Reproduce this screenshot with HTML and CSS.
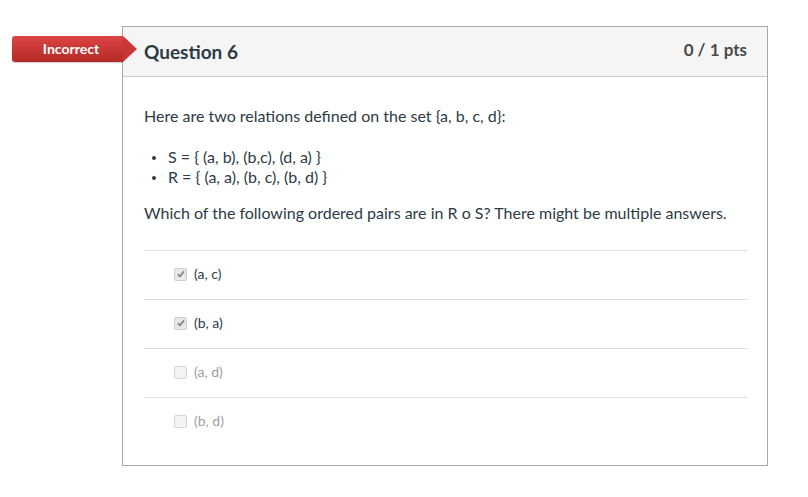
FILE: index.html
```html
<!DOCTYPE html>
<html>
<head>
<meta charset="utf-8">
<link rel="stylesheet" href="styles.css">
</head>
<body>
<div class="page">
  <div class="badge">Incorrect</div>
  <div class="card">
    <div class="card-header">
      <h2 class="q-title">Question 6</h2>
      <div class="pts">0 / 1 pts</div>
    </div>
    <div class="card-body">
      <p class="intro">Here are two relations defined on the set {a, b, c, d}:</p>
      <ul class="rels">
        <li>S = { (a, b), (b,c), (d, a) }</li>
        <li>R = { (a, a), (b, c), (b, d) }</li>
      </ul>
      <p class="ask">Which of the following ordered pairs are in R o S? There might be multiple answers.</p>
      <div class="answers">
        <div class="answer checked"><span class="cb"><svg viewBox="0 0 12 12" width="10" height="10"><path d="M2.3 6.3 L4.8 8.8 L9.6 2.8" fill="none" stroke="#8a8a8a" stroke-width="2.2" stroke-linejoin="round"/></svg></span><span class="label">(a, c)</span></div>
        <div class="answer checked"><span class="cb"><svg viewBox="0 0 12 12" width="10" height="10"><path d="M2.3 6.3 L4.8 8.8 L9.6 2.8" fill="none" stroke="#8a8a8a" stroke-width="2.2" stroke-linejoin="round"/></svg></span><span class="label">(b, a)</span></div>
        <div class="answer"><span class="cb"></span><span class="label">(a, d)</span></div>
        <div class="answer"><span class="cb"></span><span class="label">(b, d)</span></div>
      </div>
    </div>
  </div>
</div>
</body>
</html>
```

FILE: styles.css
```css
html, body {
  margin: 0;
  padding: 0;
  background: #fff;
}
body {
  font-family: Lato, "Liberation Sans", sans-serif;
  color: #2d3b45;
}
.page {
  position: relative;
  padding: 26px 0 0 122px;
}
.badge {
  position: absolute;
  left: 12px;
  top: 36px;
  width: 111px;
  height: 26px;
  background: linear-gradient(#dc4442, #b42a28);
  border-radius: 3px 0 0 3px;
  color: #fff;
  font-weight: 700;
  font-size: 14px;
  line-height: 26px;
  text-align: center;
  box-sizing: border-box;
  padding-left: 7px;
  box-shadow: 0 1px 1px rgba(0,0,0,0.2);
  z-index: 2;
}
.badge::after {
  content: "";
  position: absolute;
  right: -14px;
  top: 0;
  border-top: 13px solid transparent;
  border-bottom: 13px solid transparent;
  border-left: 14px solid #c93735;
}
.card {
  width: 644px;
  height: 438px;
  border: 1px solid #a8a8a8;
  box-sizing: content-box;
}
.card-header {
  height: 49px;
  background: #f5f5f5;
  border-bottom: 1px solid #c7cdd1;
  display: flex;
  justify-content: space-between;
  align-items: flex-start;
  padding: 0 20px 0 21px;
}
.q-title {
  margin: 13px 0 0;
  font-size: 19px;
  font-weight: 700;
  color: #2d3b45;
  line-height: 24px;
}
.pts {
  margin-top: 12px;
  font-size: 17px;
  font-weight: 700;
  color: #4a4a4a;
  line-height: 22px;
}
.card-body {
  padding: 29px 20px 0 21px;
  font-size: 16px;
  line-height: 20px;
}
.intro {
  margin: 0 0 21px;
}
.rels {
  margin: 0 0 16px;
  padding-left: 24px;
  list-style: none;
}
.rels li {
  line-height: 20px;
  display: flex;
  align-items: center;
}
.rels li::before {
  content: "";
  flex: none;
  width: 4px;
  height: 4px;
  border-radius: 50%;
  background: #2d3b45;
  margin-left: -16px;
  margin-right: 12px;
  margin-top: 1px;
}
.ask {
  margin: 0 0 27px;
}
.answers {
  display: flex;
  flex-direction: column;
}
.answer {
  border-top: 1px solid #dde0e2;
  display: flex;
  align-items: center;
  padding-left: 30px;
  padding-bottom: 2px;
  box-sizing: border-box;
  height: 49px;
  font-size: 14px;
  color: #9aa0a4;
}
.answer.checked {
  color: #2d3b45;
}
.cb {
  width: 11px;
  height: 11px;
  border: 1px solid #d6d6d6;
  border-radius: 2px;
  background: #f3f3f3;
  display: flex;
  align-items: center;
  justify-content: center;
  margin-right: 7px;
}
.checked .cb {
  background: #e8e8e8;
  border-color: #cfcfcf;
}
.label {
  line-height: 16px;
}
```
